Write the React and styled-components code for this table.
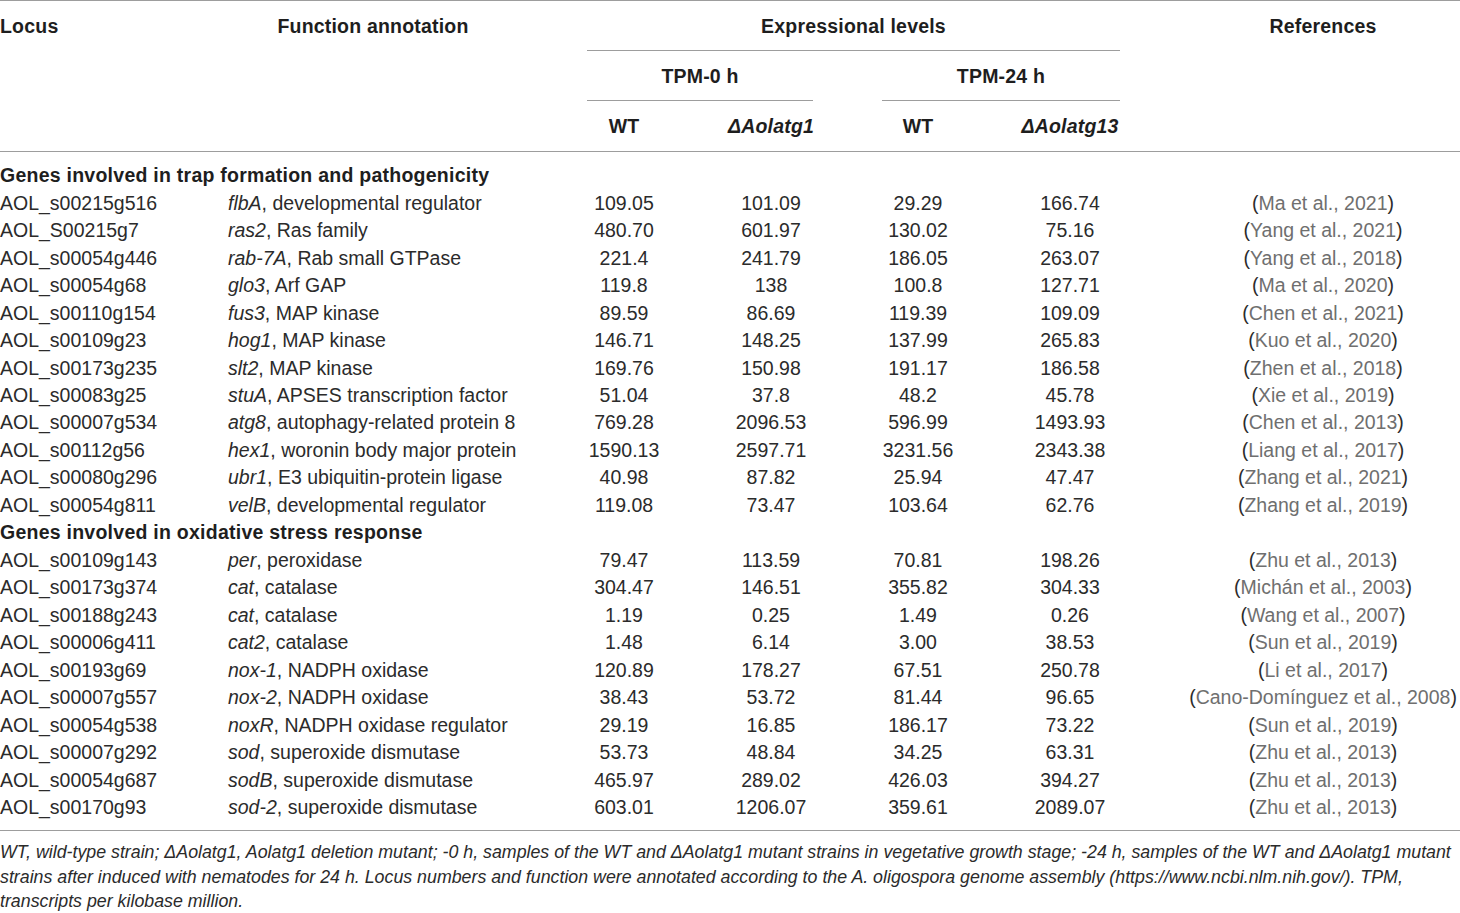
import styled, { createGlobalStyle } from 'styled-components';

const GlobalStyle = createGlobalStyle`
  html, body {
    margin: 0;
    padding: 0;
    background: #ffffff;
  }
  body {
    font-family: 'Liberation Sans', Arial, sans-serif;
    color: #231f20;
  }
`;

const COLS = '228px 324px 144px 150px 144px 160px 310px';

const Sheet = styled.div`
  width: 1460px;
`;

const Head = styled.div`
  display: grid;
  grid-template-columns: ${COLS};
  grid-template-rows: 50px 50px 50px;
  border-top: 1px solid #9d9d9d;
  border-bottom: 1px solid #9d9d9d;
  font-weight: bold;
  font-size: 19.5px;
  letter-spacing: 0.2px;
  color: #1e1e1e;
`;

const HeadCell = styled.div`
  grid-column: ${(p) => p.$col};
  grid-row: ${(p) => p.$row || 1};
  display: flex;
  align-items: center;
  justify-content: ${(p) => (p.$left ? 'flex-start' : 'center')};
  padding-left: ${(p) => p.$pl || 0}px;
  padding-right: ${(p) => p.$pr || 0}px;
  padding-top: 1px;
  font-style: ${(p) => (p.$italic ? 'italic' : 'normal')};
`;

const SpanHead = styled.div`
  grid-column: ${(p) => p.$col};
  grid-row: ${(p) => p.$row};
  margin: 0 ${(p) => p.$mr}px 0 ${(p) => p.$ml}px;
  padding-top: 1px;
  border-bottom: 1px solid #9d9d9d;
  display: flex;
  align-items: center;
  justify-content: center;
`;

const Body = styled.div`
  display: grid;
  grid-template-columns: ${COLS};
  grid-auto-rows: 27.48px;
  padding: 10px 0 9px;
  border-bottom: 1px solid #9d9d9d;
  font-size: 19.5px;
`;

const Group = styled.div`
  grid-column: 1 / -1;
  display: flex;
  align-items: center;
  font-weight: bold;
  letter-spacing: 0.25px;
  color: #1e1e1e;
`;

const Cell = styled.div`
  display: flex;
  align-items: center;
  justify-content: ${(p) => (p.$center ? 'center' : 'flex-start')};
  white-space: nowrap;
  padding-left: ${(p) => p.$pl || 0}px;
  color: #2b2b2b;
`;

const Gene = styled.i``;

const Ref = styled.span`
  color: #6f6f6f;
`;

const Paren = styled.span`
  color: #2b2b2b;
`;

const Note = styled.p`
  margin: 9px 0 0;
  font-size: 17.8px;
  line-height: 24.5px;
  font-style: italic;
  color: #2b2b2b;
`;

const NoteLine = styled.span`
  display: block;
  white-space: nowrap;
`;

const groups = [
  {
    title: 'Genes involved in trap formation and pathogenicity',
    rows: [
      ['AOL_s00215g516', 'flbA', 'developmental regulator', '109.05', '101.09', '29.29', '166.74', 'Ma et al., 2021'],
      ['AOL_S00215g7', 'ras2', 'Ras family', '480.70', '601.97', '130.02', '75.16', 'Yang et al., 2021'],
      ['AOL_s00054g446', 'rab-7A', 'Rab small GTPase', '221.4', '241.79', '186.05', '263.07', 'Yang et al., 2018'],
      ['AOL_s00054g68', 'glo3', 'Arf GAP', '119.8', '138', '100.8', '127.71', 'Ma et al., 2020'],
      ['AOL_s00110g154', 'fus3', 'MAP kinase', '89.59', '86.69', '119.39', '109.09', 'Chen et al., 2021'],
      ['AOL_s00109g23', 'hog1', 'MAP kinase', '146.71', '148.25', '137.99', '265.83', 'Kuo et al., 2020'],
      ['AOL_s00173g235', 'slt2', 'MAP kinase', '169.76', '150.98', '191.17', '186.58', 'Zhen et al., 2018'],
      ['AOL_s00083g25', 'stuA', 'APSES transcription factor', '51.04', '37.8', '48.2', '45.78', 'Xie et al., 2019'],
      ['AOL_s00007g534', 'atg8', 'autophagy-related protein 8', '769.28', '2096.53', '596.99', '1493.93', 'Chen et al., 2013'],
      ['AOL_s00112g56', 'hex1', 'woronin body major protein', '1590.13', '2597.71', '3231.56', '2343.38', 'Liang et al., 2017'],
      ['AOL_s00080g296', 'ubr1', 'E3 ubiquitin-protein ligase', '40.98', '87.82', '25.94', '47.47', 'Zhang et al., 2021'],
      ['AOL_s00054g811', 'velB', 'developmental regulator', '119.08', '73.47', '103.64', '62.76', 'Zhang et al., 2019'],
    ],
  },
  {
    title: 'Genes involved in oxidative stress response',
    rows: [
      ['AOL_s00109g143', 'per', 'peroxidase', '79.47', '113.59', '70.81', '198.26', 'Zhu et al., 2013'],
      ['AOL_s00173g374', 'cat', 'catalase', '304.47', '146.51', '355.82', '304.33', 'Michán et al., 2003'],
      ['AOL_s00188g243', 'cat', 'catalase', '1.19', '0.25', '1.49', '0.26', 'Wang et al., 2007'],
      ['AOL_s00006g411', 'cat2', 'catalase', '1.48', '6.14', '3.00', '38.53', 'Sun et al., 2019'],
      ['AOL_s00193g69', 'nox-1', 'NADPH oxidase', '120.89', '178.27', '67.51', '250.78', 'Li et al., 2017'],
      ['AOL_s00007g557', 'nox-2', 'NADPH oxidase', '38.43', '53.72', '81.44', '96.65', 'Cano-Domínguez et al., 2008'],
      ['AOL_s00054g538', 'noxR', 'NADPH oxidase regulator', '29.19', '16.85', '186.17', '73.22', 'Sun et al., 2019'],
      ['AOL_s00007g292', 'sod', 'superoxide dismutase', '53.73', '48.84', '34.25', '63.31', 'Zhu et al., 2013'],
      ['AOL_s00054g687', 'sodB', 'superoxide dismutase', '465.97', '289.02', '426.03', '394.27', 'Zhu et al., 2013'],
      ['AOL_s00170g93', 'sod-2', 'superoxide dismutase', '603.01', '1206.07', '359.61', '2089.07', 'Zhu et al., 2013'],
    ],
  },
];

export default function App() {
  return (
    <Sheet>
      <GlobalStyle />
      <Head>
        <HeadCell $col="1" $left>Locus</HeadCell>
        <HeadCell $col="2" $pr={34}>Function annotation</HeadCell>
        <SpanHead $col="3 / 7" $row="1" $ml={35} $mr={30}>Expressional levels</SpanHead>
        <HeadCell $col="7" $pl={36}>References</HeadCell>
        <SpanHead $col="3 / 5" $row="2" $ml={35} $mr={33}>TPM-0 h</SpanHead>
        <SpanHead $col="5 / 7" $row="2" $ml={36} $mr={30}>TPM-24 h</SpanHead>
        <HeadCell $col="3" $row="3">WT</HeadCell>
        <HeadCell $col="4" $row="3" $italic>ΔAolatg1</HeadCell>
        <HeadCell $col="5" $row="3">WT</HeadCell>
        <HeadCell $col="6" $row="3" $italic>ΔAolatg13</HeadCell>
      </Head>
      <Body>
        {groups.map((g) => [
          <Group key={g.title}>{g.title}</Group>,
          ...g.rows.map((r, i) => [
            <Cell key={`${g.title}-${i}-a`}>{r[0]}</Cell>,
            <Cell key={`${g.title}-${i}-b`}>
              <Gene>{r[1]}</Gene>, {r[2]}
            </Cell>,
            <Cell key={`${g.title}-${i}-c`} $center>{r[3]}</Cell>,
            <Cell key={`${g.title}-${i}-d`} $center>{r[4]}</Cell>,
            <Cell key={`${g.title}-${i}-e`} $center>{r[5]}</Cell>,
            <Cell key={`${g.title}-${i}-f`} $center>{r[6]}</Cell>,
            <Cell key={`${g.title}-${i}-g`} $center $pl={36}>
              <Paren>(</Paren>
              <Ref>{r[7]}</Ref>
              <Paren>)</Paren>
            </Cell>,
          ]),
        ])}
      </Body>
      <Note>
        <NoteLine>
          WT, wild-type strain; ΔAolatg1, Aolatg1 deletion mutant; -0 h, samples of the WT and ΔAolatg1 mutant strains in vegetative growth stage; -24 h, samples of the WT and ΔAolatg1 mutant
        </NoteLine>
        <NoteLine>
          strains after induced with nematodes for 24 h. Locus numbers and function were annotated according to the A. oligospora genome assembly (https://www.ncbi.nlm.nih.gov/). TPM,
        </NoteLine>
        <NoteLine>transcripts per kilobase million.</NoteLine>
      </Note>
    </Sheet>
  );
}
